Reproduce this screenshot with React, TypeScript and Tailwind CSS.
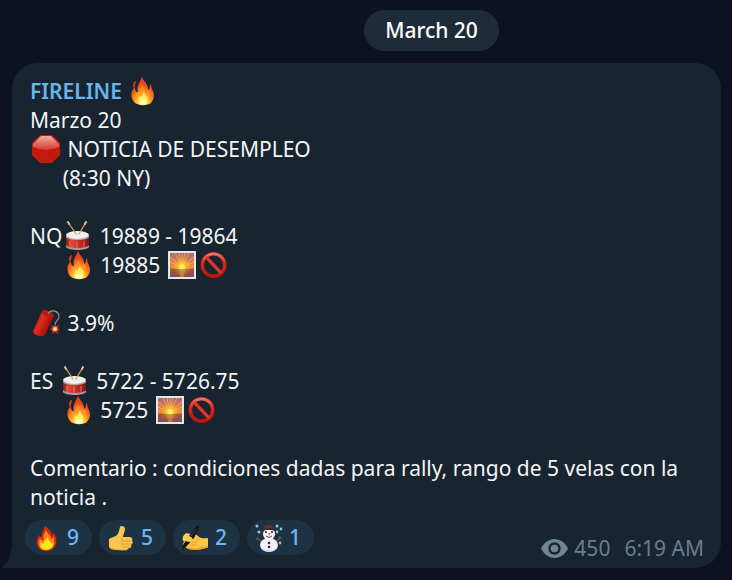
import type { ReactNode } from 'react'

const EMOJI = 'inline-block size-[30px] align-middle -mt-1 mx-px'

function Flame() {
  return (
    <svg className={EMOJI} viewBox="0 0 30 30" role="img" aria-label="fire">
      <defs>
        <radialGradient id="flame" cx="0.5" cy="0.9" r="0.85">
          <stop offset="0" stopColor="#fffbc0" />
          <stop offset="0.2" stopColor="#ffe94c" />
          <stop offset="0.42" stopColor="#fb9a1e" />
          <stop offset="0.7" stopColor="#ee4b1c" />
          <stop offset="1" stopColor="#d93a1c" />
        </radialGradient>
      </defs>
      <path d="M14 0C14 4 20 7 20 13C21 15 22 12 22 8C24 9 23 12 25 15C27 20 26 23 23 27C20 30 9 30 6 26C3 22 3 18 4 15C5 13 6 12 7 11C7 15 8 16 10 16C8 9 13 6 14 0Z" fill="url(#flame)" />
      <path d="M5 9C5 7 6 5 8 5C7 8 8 9 6 12C5 11 5 10 5 9Z" fill="#d9361c" />
      <path d="M14 7C14 12 18 13 18 18C20 17 21 14 21 13C23 20 22 26 15 27C9 27 7 22 9 18C10 19 11 20 12 19C10 14 14 12 14 7Z" fill="#ff9728" opacity="0.5" />
      <path d="M16 15C16 19 20 20 20 24C19 28 11 29 10 24C10 22 11 21 12 20C13 22 15 20 16 15Z" fill="#fff36a" opacity="0.85" />
      <ellipse cx="15" cy="26" rx="4" ry="2" fill="#fffde0" opacity="0.8" />
    </svg>
  )
}

function StopSign() {
  return (
    <svg className={EMOJI} viewBox="0 0 30 30" role="img" aria-label="stop sign">
      <defs>
        <linearGradient id="stop" x1="0" y1="0" x2="0" y2="1">
          <stop offset="0" stopColor="#f3aaa2" />
          <stop offset="1" stopColor="#d23a2b" />
        </linearGradient>
      </defs>
      <path d="M9 1H21L29 9V21L21 29H9L1 21V9Z" fill="#c5190a" />
      <path d="M10 2H20L28 10V13Q15 19 2 13V10Z" fill="url(#stop)" />
    </svg>
  )
}

function Drum() {
  return (
    <svg className={EMOJI} viewBox="0 0 30 30" role="img" aria-label="drum">
      <defs>
        <linearGradient id="shell" x1="0" x2="1">
          <stop offset="0" stopColor="#861b19" />
          <stop offset="0.25" stopColor="#dd483b" />
          <stop offset="0.65" stopColor="#bd2922" />
          <stop offset="1" stopColor="#771514" />
        </linearGradient>
      </defs>
      <path d="M3 15V25C5 29 24 29 26 25V15Z" fill="url(#shell)" />
      <path d="M3 24C5 28 24 28 26 24V26C24 30 5 30 3 26Z" fill="#b59693" />
      <path d="M3 14C3 19 26 19 26 14V16C25 20 4 20 3 16Z" fill="#b6a7a7" />
      <ellipse cx="14.5" cy="14" rx="11.5" ry="4" fill="#f1eeee" />
      <path d="M7 20V26M14 20V27M21 20V26" stroke="#e78d78" strokeWidth="0.8" />
      <path d="M5 1L13 13M23 1L16 13" stroke="#cda568" strokeWidth="1.3" strokeLinecap="round" />
      <path d="M5 1L6 3M23 1L22 3" stroke="#e5cb93" strokeWidth="1.7" strokeLinecap="round" />
    </svg>
  )
}

function Sunrise() {
  return (
    <svg className={EMOJI} viewBox="0 0 30 30" role="img" aria-label="sunrise">
      <defs>
        <linearGradient id="sky" x1="0" y1="0" x2="0" y2="1">
          <stop offset="0" stopColor="#a9677c" />
          <stop offset="0.55" stopColor="#f08f36" />
          <stop offset="0.64" stopColor="#f08f36" />
          <stop offset="0.65" stopColor="#a0613f" />
          <stop offset="1" stopColor="#70495c" />
        </linearGradient>
        <radialGradient id="glow" cx="0.5" cy="0.58" r="0.4">
          <stop offset="0" stopColor="#fff894" />
          <stop offset="0.35" stopColor="#ffc636" />
          <stop offset="1" stopColor="#ff9b2a" stopOpacity="0" />
        </radialGradient>
      </defs>
      <rect x="1" y="1" width="28" height="28" fill="#e8e5e9" />
      <rect x="3" y="3" width="24" height="24" fill="url(#sky)" />
      <path d="M15 17L3 7M15 17L8 3M15 17V3M15 17L22 3M15 17L27 7M15 17L3 12M15 17L27 12M15 17L12 3M15 17L18 3" stroke="#ffbd50" strokeWidth="0.9" opacity="0.75" />
      <rect x="3" y="3" width="24" height="24" fill="url(#glow)" />
      <circle cx="15" cy="17" r="2.6" fill="#fff36d" />
      <path d="M3 19H27V27H3Z" fill="#9a5447" opacity="0.6" />
      <path d="M12 20H18M12 22H18M13 24H17M13 26H17" stroke="#f9a93a" strokeWidth="1.2" opacity="0.8" />
    </svg>
  )
}

function Prohibited() {
  return (
    <svg className={EMOJI} viewBox="0 0 30 30" role="img" aria-label="prohibited">
      <defs>
        <linearGradient id="ring" x1="0" y1="0" x2="0" y2="1">
          <stop offset="0" stopColor="#ed7466" />
          <stop offset="0.4" stopColor="#d32b1f" />
          <stop offset="1" stopColor="#bd1409" />
        </linearGradient>
      </defs>
      <circle cx="14.5" cy="15" r="11.2" fill="none" stroke="#a91c12" strokeWidth="3.6" />
      <path d="M7 7L22 23" stroke="#b51f14" strokeWidth="3.6" />
      <circle cx="14.5" cy="15" r="11.2" fill="none" stroke="url(#ring)" strokeWidth="2.8" />
      <path d="M7 7L22 23" stroke="#d93a2c" strokeWidth="2.6" />
    </svg>
  )
}

function Firecracker() {
  return (
    <svg className={EMOJI} viewBox="0 0 30 30" role="img" aria-label="firecracker">
      <defs>
        <linearGradient id="tube" x1="0" y1="0.2" x2="1" y2="0.8">
          <stop offset="0" stopColor="#7e0d0b" />
          <stop offset="0.38" stopColor="#e32c20" />
          <stop offset="0.62" stopColor="#b51811" />
          <stop offset="1" stopColor="#790c09" />
        </linearGradient>
      </defs>
      <path d="M11 3C14 1 22 4 23 8L14 27C11 30 2 27 2 23Z" fill="url(#tube)" />
      <ellipse cx="17" cy="6" rx="6" ry="3" transform="rotate(24 17 6)" fill="#b51a13" />
      <path d="M17 6C19 1 28 2 28 9C28 12 24 13 24 17" fill="none" stroke="#8d8d83" strokeWidth="1.3" />
      <path d="M24 16L25 18L28 17L27 20L29 22L27 23L27 26L24 24L21 26L21 23L19 21L21 20L20 17L23 18Z" fill="#b92a1c" />
      <circle cx="24" cy="21" r="2.4" fill="#ff9561" />
      <circle cx="24" cy="21" r="1.4" fill="#fff5b0" />
    </svg>
  )
}

function ReactionFlame() {
  return (
    <svg className="size-[26px]" viewBox="0 0 26 26" aria-hidden="true">
      <path d="M11 1C15 4 18 7 18 11C19 10 19 8 19 7C22 11 23 15 22 19C20 24 17 26 12 26C6 26 2 22 3 16C3 13 5 11 5 10C6 11 7 12 8 12C7 8 10 5 11 1Z" fill="#d92b0b" />
      <path d="M12 5C13 9 17 10 17 14C19 14 19 12 19 11C21 16 21 21 18 23C14 26 6 26 5 20C4 17 5 15 6 13C7 15 8 16 10 15C8 11 11 8 12 5Z" fill="#ff841d" />
      <path d="M14 12C14 16 17 16 17 19C19 18 19 17 19 16C20 21 17 25 12 25C7 25 5 21 7 17C8 19 9 19 10 18C10 15 13 14 14 12Z" fill="#ffe51b" />
    </svg>
  )
}

function ThumbsUp() {
  return (
    <svg className="size-[26px]" viewBox="0 0 26 26" aria-hidden="true">
      <path d="M12 2C13 0 17 1 17 4C17 7 15 9 15 12L21 12C24 12 25 14 24 15C25 17 25 19 23 20C24 22 23 23 21 23C20 25 18 25 16 25H10C6 25 3 25 1 22V14C4 12 7 12 9 10C11 8 11 5 12 2Z" fill="#fbc64f" />
      <path d="M14 13C13 15 14 16 17 16H23M16 19H23M16 22H21M14 16C13 18 14 18 15 19C14 21 15 22 16 22" fill="none" stroke="#dd962f" strokeWidth="0.9" strokeLinecap="round" />
      <path d="M2 23C6 25 12 25 19 25" fill="none" stroke="#e59d30" strokeWidth="0.8" />
    </svg>
  )
}

function WritingHand() {
  return (
    <svg className="h-[26px] w-7" viewBox="0 0 28 26" aria-hidden="true">
      <path d="M3 10C4 8 7 8 9 9C12 7 15 9 18 12C21 14 24 13 27 13V23C22 23 20 25 16 25C11 25 6 24 3 22C1 20 2 18 3 17C1 15 1 12 3 10Z" fill="#fdc744" />
      <path d="M4 22C11 24 18 24 27 21V23C22 23 20 25 16 25C11 25 6 24 4 22Z" fill="#e8992b" />
      <path d="M10 17C13 18 16 17 18 15M9 20C12 21 14 20 15 19" fill="none" stroke="#e09a2f" strokeWidth="1" strokeLinecap="round" />
      <path d="M15 2C16 0 19 0 18 3L13 13L5 22L1 26L2 20L8 11Z" fill="#131517" />
      <path d="M15 4L10 11" stroke="#4b4f53" strokeWidth="0.8" />
      <path d="M3 11C4 9 7 10 10 12C13 14 12 17 9 17C7 17 5 16 3 15Z" fill="#ffcf55" />
    </svg>
  )
}

function Snowman() {
  return (
    <svg className="h-7 w-7" viewBox="0 0 28 28" aria-hidden="true">
      <path d="M8 18L3 15L1 15M4 16L2 13M20 18L25 14L27 14M24 15L25 12" fill="none" stroke="#80543d" strokeWidth="1.2" />
      <ellipse cx="14" cy="21" rx="9" ry="7" fill="#f0f3f8" />
      <path d="M6 24C10 27 18 27 22 24C19 29 9 29 6 24Z" fill="#c3d3e0" />
      <circle cx="14" cy="10" r="6" fill="#fafafc" />
      <path d="M8 6C8 -1 20 -1 20 6Z" fill="#5e3028" />
      <path d="M8 6Q14 4 20 6" stroke="#3c2425" strokeWidth="1.4" fill="none" />
      <circle cx="11" cy="8" r="1.1" fill="#202631" />
      <circle cx="17" cy="8" r="1.1" fill="#202631" />
      <path d="M13 9H16L14 12Z" fill="#ed6a21" />
      <path d="M11 12Q14 15 17 12" stroke="#424854" strokeWidth="1" fill="none" />
      <circle cx="14" cy="19" r="1.3" fill="#272d36" />
      <circle cx="14" cy="23" r="1.3" fill="#272d36" />
      <g fill="#83c8df">
        <circle cx="2" cy="2" r="1.5" />
        <circle cx="4" cy="8" r="1.5" />
        <circle cx="22" cy="2" r="1.5" />
        <circle cx="26" cy="5" r="1.4" />
        <circle cx="22" cy="8" r="1.4" />
        <circle cx="25" cy="19" r="1.4" />
      </g>
    </svg>
  )
}

function Reaction({ label, count, children }: { label: string; count: number; children: ReactNode }) {
  return (
    <button
      type="button"
      aria-label={`${label} ${count}`}
      className="flex h-[35px] w-[67px] items-center rounded-full bg-[#1d3344] pl-2 text-[21px] font-medium text-[#6fb6f3]"
    >
      <span className="flex w-7 shrink-0 items-center justify-center">{children}</span>
      <span className="ml-1.5">{count}</span>
    </button>
  )
}

export default function App() {
  return (
    <main className="min-h-screen bg-[#0d131e] pt-2.5 pb-3 font-['Noto_Sans','Open_Sans',sans-serif] text-[21px] text-[#f3f5f7]">
      <div className="flex justify-center pl-[131px]">
        <time className="flex h-[41px] items-center rounded-full bg-[#1e2b39] px-[21px] font-medium text-white">March 20</time>
      </div>

      <article className="relative mt-3 mr-[11px] ml-3 rounded-t-[26px] rounded-br-[26px] bg-[#18242f] pt-3.5 pb-1.5">
        <svg className="absolute bottom-0 -left-2.5 h-6 w-2.5" viewBox="0 0 10 24" aria-hidden="true">
          <path d="M10 0C9 10 7 18 1 22C0 23 0 24 1 24H10Z" fill="#18242f" />
        </svg>

        <div className="px-[18px] leading-[29px] whitespace-pre-wrap">
          <h2 className="h-[29px] font-semibold text-[#69b5ed]">FIRELINE <Flame /></h2>
          <p>Marzo 20</p>
          <p className="h-[29px]"><StopSign /> NOTICIA DE DESEMPLEO</p>
          <p>{'      (8:30 NY)'}</p>
          <p className="mt-[29px] h-[29px]">NQ<Drum /> 19889 - 19864</p>
          <p className="h-[29px]">{'      '}<Flame /> 19885 <Sunrise /><Prohibited /></p>
          <p className="mt-[29px] h-[29px]"><Firecracker /> 3.9%</p>
          <p className="mt-[29px] h-[29px]">ES <Drum /> 5722 - 5726.75</p>
          <p className="h-[29px]">{'      '}<Flame /> 5725 <Sunrise /><Prohibited /></p>
          <p className="mt-[29px]">Comentario : condiciones dadas para rally, rango de 5 velas con la noticia .</p>
        </div>

        <footer className="mt-2 flex items-start justify-between pr-[17px] pl-[13px]">
          <div className="flex gap-[7px]">
            <Reaction label="Fire" count={9}><ReactionFlame /></Reaction>
            <Reaction label="Thumbs up" count={5}><ThumbsUp /></Reaction>
            <Reaction label="Writing hand" count={2}><WritingHand /></Reaction>
            <Reaction label="Snowman" count={1}><Snowman /></Reaction>
          </div>
          <div className="mt-3.5 flex items-center leading-7 text-[#6a7e8e]">
            <svg className="mr-1.5 h-[19px] w-[27px]" viewBox="0 0 27 19" role="img" aria-label="views">
              <path d="M0 9.5C3 3.5 8 0 13.5 0S24 3.5 27 9.5C24 15.5 19 19 13.5 19S3 15.5 0 9.5Z" fill="#718596" />
              <circle cx="13.5" cy="9.5" r="5" fill="#718596" stroke="#18242f" strokeWidth="2.4" />
            </svg>
            <span>450</span>
            <time className="ml-3.5">6:19 AM</time>
          </div>
        </footer>
      </article>
    </main>
  )
}
